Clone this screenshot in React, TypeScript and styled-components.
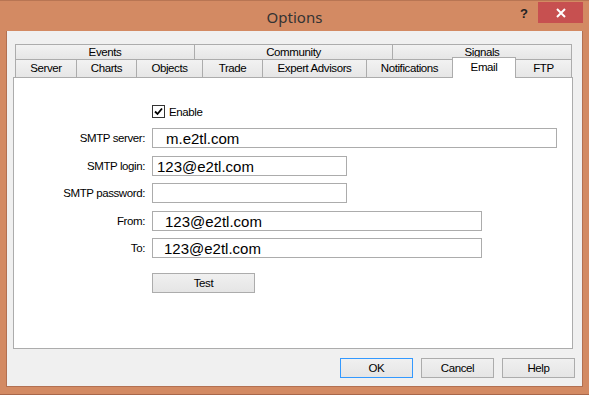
import styled, { createGlobalStyle } from 'styled-components';

const GlobalStyle = createGlobalStyle`
  html, body {
    margin: 0;
    padding: 0;
    background: #d38a63;
  }
  body {
    font-family: "Liberation Sans", Arial, sans-serif;
  }
`

const uiFont = `
  font-family: "Liberation Sans", Arial, sans-serif;
  font-size: 11.5px;
  letter-spacing: -0.4px;
`

const Window = styled.div`
  width: 589px;
  height: 395px;
  box-sizing: border-box;
  background: #d38a63;
  border-top: 1px solid #b87553;
  border-bottom: 1px solid #a8674a;
  display: flex;
  flex-direction: column;
`
const TitleBar = styled.div`
  height: 30px;
  position: relative;
  display: flex;
  align-items: center;
  justify-content: center;
`
const Title = styled.div`
  font-family: "Noto Sans", "Open Sans", sans-serif;
  font-size: 15px;
  color: #333;
  margin-top: 2px;
`
const Help = styled.div`
  position: absolute;
  left: 520px;
  top: 5px;
  font-family: "Liberation Sans", Arial, sans-serif;
  font-weight: bold;
  font-size: 13px;
  color: #222;
`
const CloseButton = styled.div`
  position: absolute;
  left: 538px;
  top: 1px;
  width: 45px;
  height: 21px;
  background: #c75050;
  display: flex;
  align-items: center;
  justify-content: center;
`
const Client = styled.div`
  margin: 0 6px 7px 6px;
  flex: 1;
  background: #f0f0f0;
  border: 1px solid #b27052;
  border-top: none;
  display: flex;
  flex-direction: column;
`
const TabArea = styled.div`
  margin: 13px 9px 0 6px;
  display: flex;
  flex-direction: column;
`
const TabRow = styled.div<{ $h: number }>`
  display: flex;
  padding-left: 2px;
  height: ${p => p.$h}px;
  align-items: flex-end;
`
const Tab = styled.div<{ $w: number; $h: number }>`
  ${uiFont}
  width: ${p => p.$w}px;
  height: ${p => p.$h}px;
  box-sizing: border-box;
  border: 1px solid #acacac;
  border-left-width: 0;
  border-bottom: none;
  &:first-child { border-left-width: 1px; }
  background: linear-gradient(#f2f2f2, #e6e6e6);
  color: #000;
  display: flex;
  align-items: center;
  justify-content: center;
  line-height: 1;
  padding-top: 1px;
`
const ActiveTab = styled(Tab)`
  background: #fff;
  border-left-width: 1px;
  margin-left: -1px;
  width: ${p => p.$w + 1}px;
  height: ${p => p.$h + 3}px;
  margin-bottom: -1px;
  position: relative;
  z-index: 1;
  align-items: flex-start;
  padding-top: 4px;
  & + div { border-left-width: 0; }
`
const Panel = styled.div`
  height: 272px;
  box-sizing: border-box;
  border: 1px solid #acacac;
  background: #fff;
  display: flex;
  flex-direction: column;
  padding-left: 138px;
`
const CheckRow = styled.label`
  ${uiFont}
  margin-top: 27px;
  display: flex;
  align-items: center;
  gap: 4px;
  height: 13px;
`
const CheckBox = styled.span`
  width: 13px;
  height: 13px;
  box-sizing: border-box;
  border: 1px solid #333;
  background: #fff;
  display: flex;
  align-items: center;
  justify-content: center;
`
const Form = styled.div`
  margin-top: 10px;
  margin-left: -138px;
  display: grid;
  grid-template-columns: 131px auto;
  grid-auto-rows: 20px;
  column-gap: 7px;
  row-gap: 7.5px;
  align-items: center;
`
const Label = styled.div`
  ${uiFont}
  text-align: right;
  color: #000;
`
const Field = styled.div<{ $w: number; $indent: number }>`
  width: ${p => p.$w}px;
  height: 20px;
  box-sizing: border-box;
  border: 1px solid #acacac;
  background: #fff;
  font-size: 15px;
  line-height: 19px;
  padding-left: ${p => p.$indent}px;
  color: #000;
`
const Button = styled.div<{ $default?: boolean }>`
  ${uiFont}
  width: 73px;
  height: 20px;
  box-sizing: border-box;
  border: 1px solid ${p => (p.$default ? '#3399ff' : '#acacac')};
  background: linear-gradient(#f0f0f0, #e5e5e5);
  display: flex;
  align-items: center;
  justify-content: center;
`
const TestButton = styled(Button)`
  width: 103px;
  margin-top: 15px;
`
const Footer = styled.div`
  display: flex;
  justify-content: flex-end;
  gap: 8px;
  margin: 9px 7px 0 0;
`

const backTabs = [
  { name: 'Events', w: 180 },
  { name: 'Community', w: 198 },
  { name: 'Signals', w: 179 },
]
const frontTabs = [
  { name: 'Server', w: 62 },
  { name: 'Charts', w: 60 },
  { name: 'Objects', w: 66 },
  { name: 'Trade', w: 60 },
  { name: 'Expert Advisors', w: 104 },
  { name: 'Notifications', w: 86 },
  { name: 'Email', w: 63, active: true },
  { name: 'FTP', w: 56 },
]
const fields = [
  { label: 'SMTP server:', value: 'm.e2tl.com', w: 405, indent: 13 },
  { label: 'SMTP login:', value: '123@e2tl.com', w: 195, indent: 4 },
  { label: 'SMTP password:', value: '', w: 195, indent: 4 },
  { label: 'From:', value: '123@e2tl.com', w: 330, indent: 12 },
  { label: 'To:', value: '123@e2tl.com', w: 330, indent: 11 },
]

export default function App() {
  return (
    <>
      <GlobalStyle />
      <Window>
        <TitleBar>
          <Title>Options</Title>
          <Help>?</Help>
          <CloseButton>
            <svg width="10" height="10" viewBox="0 0 10 10">
              <path d="M1 1 L9 9 M9 1 L1 9" stroke="#fff" strokeWidth="2" />
            </svg>
          </CloseButton>
        </TitleBar>
        <Client>
          <TabArea>
            <TabRow $h={15}>
              {backTabs.map(t => (
                <Tab key={t.name} $w={t.w} $h={15}>{t.name}</Tab>
              ))}
            </TabRow>
            <TabRow $h={18}>
              {frontTabs.map(t =>
                t.active ? (
                  <ActiveTab key={t.name} $w={t.w} $h={18}>{t.name}</ActiveTab>
                ) : (
                  <Tab key={t.name} $w={t.w} $h={18}>{t.name}</Tab>
                )
              )}
            </TabRow>
            <Panel>
              <CheckRow>
                <CheckBox>
                  <svg width="11" height="11" viewBox="0 0 11 11">
                    <path d="M2 5.5 L4.5 8 L9 2.5" stroke="#000" strokeWidth="1.8" fill="none" />
                  </svg>
                </CheckBox>
                Enable
              </CheckRow>
              <Form>
                {fields.map(f => [
                  <Label key={f.label + '-l'}>{f.label}</Label>,
                  <Field key={f.label + '-f'} $w={f.w} $indent={f.indent}>{f.value}</Field>,
                ])}
              </Form>
              <TestButton>Test</TestButton>
            </Panel>
          </TabArea>
          <Footer>
            <Button $default>OK</Button>
            <Button>Cancel</Button>
            <Button>Help</Button>
          </Footer>
        </Client>
      </Window>
    </>
  )
}
